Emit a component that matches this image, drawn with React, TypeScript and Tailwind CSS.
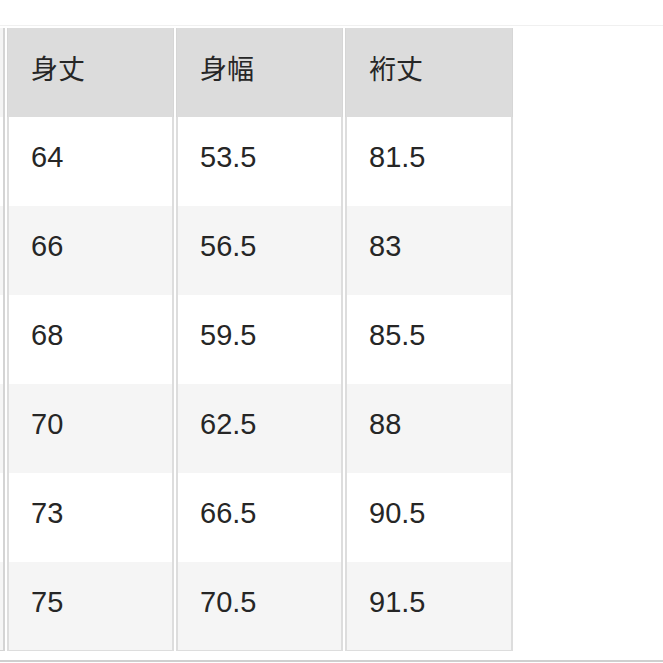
const headers = ["身丈", "身幅", "裄丈"];

const rows = [
  ["64", "53.5", "81.5"],
  ["66", "56.5", "83"],
  ["68", "59.5", "85.5"],
  ["70", "62.5", "88"],
  ["73", "66.5", "90.5"],
  ["75", "70.5", "91.5"],
];

const font = {
  fontFamily: '"Liberation Sans", "Noto Sans CJK JP", sans-serif',
};

export default function App() {
  return (
    <div className="h-[663px] w-[663px] overflow-hidden bg-white" style={font}>
      <div className="h-[26px] border-b border-[#f0f0f0]" />
      <div className="grid grid-cols-[5px_167px_167px_168px] gap-x-[2px] pt-[2px] text-[29px] text-[#262626]">
        {/* header row */}
        <div className="h-[89px] border-r-2 border-[#d4d4d4] bg-[#f4f4f4]" />
        {headers.map((h) => (
          <div
            key={h}
            className="flex h-[89px] items-center border-x border-[#d6d6d6] bg-[#dcdcdc] pl-[23px] pb-[5px] text-[27px]"
          >
            {h}
          </div>
        ))}

        {/* body rows */}
        {rows.map((r, i) => {
          const bg = i % 2 === 0 ? "bg-white" : "bg-[#f5f5f5]";
          const last = i === rows.length - 1 ? "border-b" : "";
          return [
            <div key={`l${i}`} className={`h-[89px] border-r-2 border-[#d4d4d4] ${bg} ${last}`} />,
            ...r.map((v, j) => (
              <div
                key={`${i}-${j}`}
                className={`flex h-[89px] items-center border-x-2 border-[#dddddd] pl-[22px] pb-[7px] ${bg} ${last}`}
              >
                {v}
              </div>
            )),
          ];
        })}
      </div>
      <div className="mt-[9px] h-[2px] bg-[#cfcfcf]" />
    </div>
  );
}
